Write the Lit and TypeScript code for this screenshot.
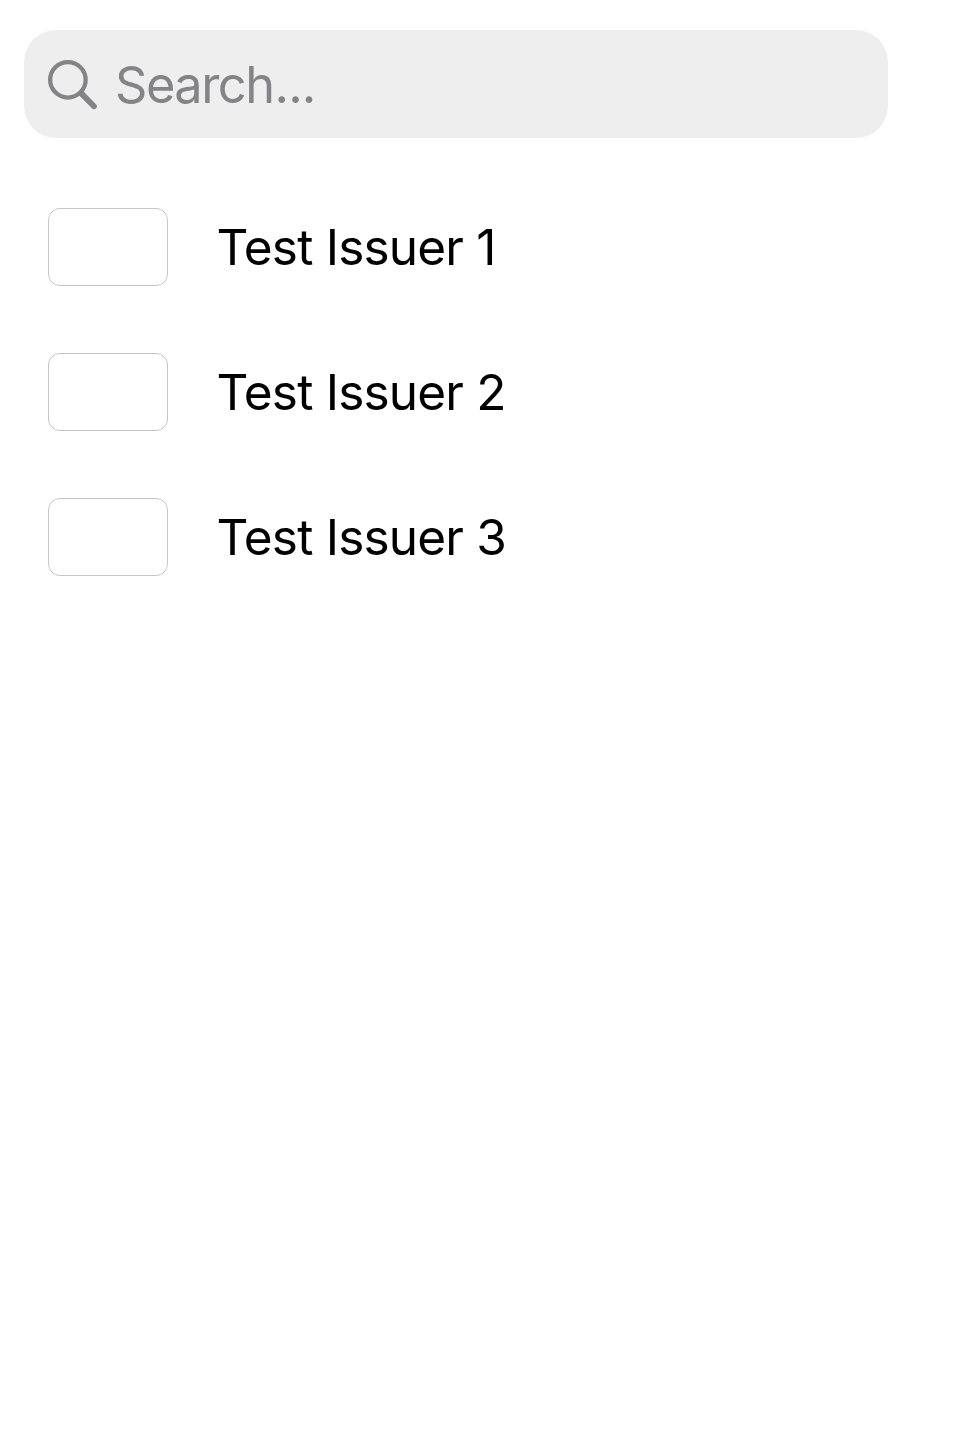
import { LitElement, html, css } from "lit";
import { customElement } from "lit/decorators.js";

@customElement("app-root")
export class AppRoot extends LitElement {
  static styles = css`
    :host {
      display: block;
      box-sizing: border-box;
      min-height: 1440px;
      padding: 30px 72px 0 24px;
      background: #fff;
      color: #000;
      font-family: Inter, "Liberation Sans", sans-serif;
      font-size: 49.5px;
      line-height: 60px;
    }
    .search {
      display: flex;
      align-items: center;
      height: 108px;
      box-sizing: border-box;
      padding-left: 20px;
      gap: 13px;
      border-radius: 32px;
      background: #eee;
      color: #848488;
    }
    .icon {
      flex: none;
      width: 58px;
      height: 58px;
    }
    .placeholder {
      padding-top: 2px;
      font-size: 50.5px;
      letter-spacing: -1.5px;
    }
    .dots {
      margin-left: 1px;
      letter-spacing: -0.9px;
    }
    .list {
      display: flex;
      flex-direction: column;
      gap: 67px;
      margin: 0;
      padding: 70px 0 0 24px;
      list-style: none;
    }
    .row {
      display: flex;
      align-items: center;
      gap: 48.5px;
      height: 78px;
    }
    .logo {
      box-sizing: border-box;
      width: 120px;
      height: 78px;
      border: 1px solid #c6c6c8;
      border-radius: 12px;
    }
    .name {
      letter-spacing: -0.8px;
    }
  `;

  private issuers = ["Test Issuer 1", "Test Issuer 2", "Test Issuer 3"];

  render() {
    return html`
      <div class="search">
        <svg class="icon" viewBox="0 0 58 58" fill="none" stroke="currentColor" stroke-linecap="round">
          <circle cx="23.9" cy="24.8" r="17.75" stroke-width="4.3" />
          <path d="M37.3 38.4L50 51.2" stroke-width="5.8" />
        </svg>
        <span class="placeholder">Search<span class="dots">...</span></span>
      </div>
      <ul class="list">
        ${this.issuers.map(
          (name) => html`<li class="row"><span class="logo"></span><span class="name">${name}</span></li>`
        )}
      </ul>
    `;
  }
}
